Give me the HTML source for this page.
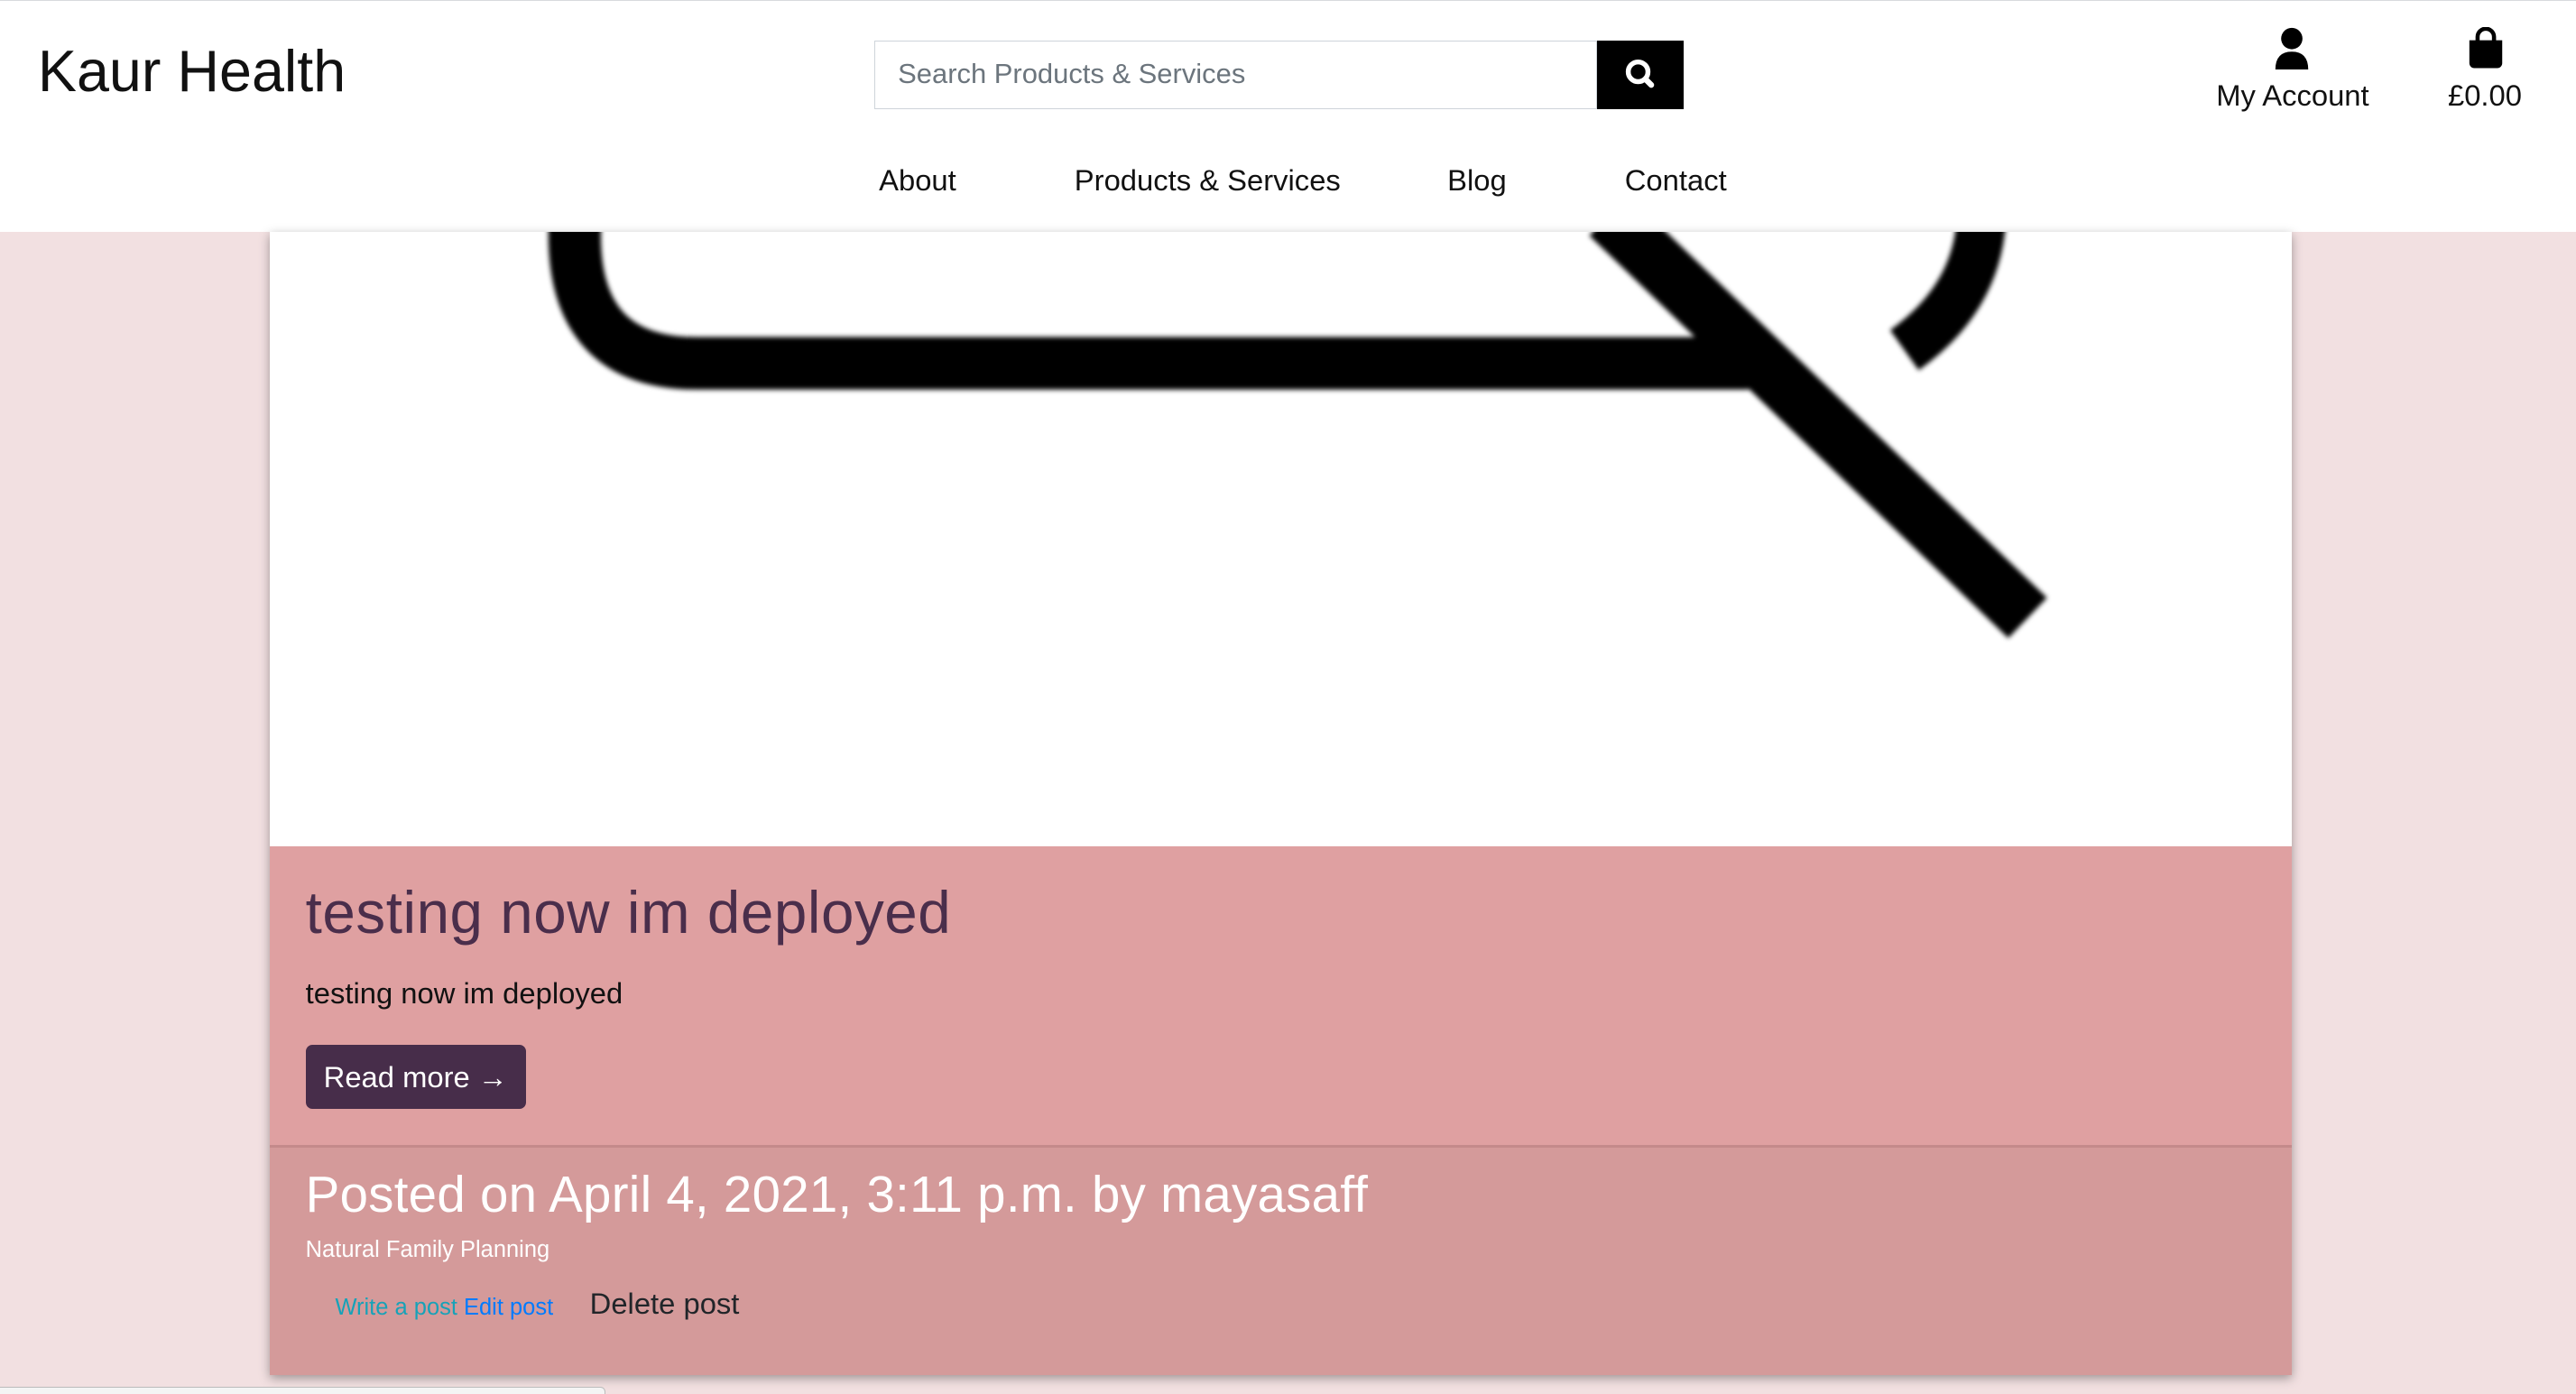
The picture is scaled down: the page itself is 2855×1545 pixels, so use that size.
<!DOCTYPE html>
<html><head><meta charset="utf-8"><style>
html{zoom:1.8208}
body{margin:0;width:1568px;height:848px;overflow:hidden;background:#f2e0e1;font-family:"Liberation Sans",sans-serif;position:relative}
.hdr{position:absolute;left:0;top:0;width:1568px;height:141px;background:#fff;border-top:1px solid #d8dadd;box-sizing:border-box}
.a{position:absolute;white-space:nowrap}
.card{position:absolute;left:164px;top:141px;width:1231px;height:696px;background:#fff;box-shadow:0 2px 6px rgba(0,0,0,.35);overflow:hidden}
</style></head><body>
<div class="hdr">
 <div class="a" style="left:23px;top:22px;font-size:35.5px;color:#111">Kaur Health</div>
 <div class="a" style="left:532px;top:24px;width:440px;height:42px;border:1px solid #ced4da;box-sizing:border-box;font-size:17px;color:#6c757d;line-height:40px;padding-left:14px">Search Products &amp; Services</div>
 <div class="a" style="left:972px;top:24px;width:53px;height:42px;background:#000">
  <svg width="53" height="42" viewBox="0 0 53 42"><circle cx="25" cy="19" r="6" stroke="#fff" stroke-width="3" fill="none"/><path d="M29.5 23.5 L33 27" stroke="#fff" stroke-width="3.5" stroke-linecap="round"/></svg>
 </div>
 <svg class="a" style="left:1384px;top:16px" width="22" height="26" viewBox="0 0 22 26"><circle cx="11" cy="7" r="6.5" fill="#000"/><path d="M1 26 Q1 15 11 15 Q21 15 21 26Z" fill="#000"/></svg>
 <div class="a" style="left:1349px;top:47px;font-size:18px;color:#111">My Account</div>
 <svg class="a" style="left:1502px;top:16px" width="22" height="26" viewBox="0 0 22 26"><path d="M6 9 V6 a5 5 0 0 1 10 0 V9" stroke="#000" stroke-width="2.5" fill="none"/><path d="M1 8 H21 V22 a3 3 0 0 1-3 3 H4 a3 3 0 0 1-3-3Z" fill="#000"/></svg>
 <div class="a" style="left:1490px;top:47px;font-size:18px;color:#111">£0.00</div>
 <div class="a" style="left:535px;top:99px;font-size:18px;color:#111">About</div>
 <div class="a" style="left:654px;top:99px;font-size:18px;color:#111">Products &amp; Services</div>
 <div class="a" style="left:881px;top:99px;font-size:18px;color:#111">Blog</div>
 <div class="a" style="left:989px;top:99px;font-size:18px;color:#111">Contact</div>
</div>
<div class="card">
 <svg class="a" style="left:0;top:0" width="1231" height="374" viewBox="0 0 1231 374">
  <g stroke="#000" stroke-width="32" fill="none" style="filter:blur(1.5px)">
   <path d="M186 -10 Q180 80 260 80 H900"/>
   <path d="M815 -10 L1070 235" stroke-width="34"/>
   <path d="M1042 -10 Q1040 40 995 72" stroke-width="30"/>
  </g>
 </svg>
 <div class="a" style="left:0;top:374px;width:1231px;height:182px;background:#dfa0a1"></div>
 <div class="a" style="left:22px;top:394px;font-size:36px;letter-spacing:0.3px;color:#4a2e4b">testing now im deployed</div>
 <div class="a" style="left:22px;top:453px;font-size:18px;color:#111">testing now im deployed</div>
 <div class="a" style="left:22px;top:495px;width:134px;height:39px;background:#472d4a;border-radius:4px;color:#fff;font-size:18px;line-height:39px;text-align:center">Read more →</div>
 <div class="a" style="left:0;top:556px;width:1231px;height:140px;background:#d49a9a;border-top:2px solid #c48a8b;box-sizing:border-box"></div>
 <div class="a" style="left:22px;top:568px;font-size:31px;letter-spacing:0.15px;color:#fff">Posted on April 4, 2021, 3:11 p.m. by mayasaff</div>
 <div class="a" style="left:22px;top:612px;font-size:14px;color:#fff">Natural Family Planning</div>
 <div class="a" style="left:40px;top:647px;font-size:14px;color:#17a2b8">Write a post <span style="color:#007bff">Edit post</span></div>
 <div class="a" style="left:195px;top:642px;font-size:18px;color:#212529">Delete post</div>
</div>
<div class="a" style="left:0;top:844px;width:368px;height:4px;border-top:1px solid #bbb;border-right:1px solid #bbb;background:#f4f4f4;border-radius:0 3px 0 0"></div>
</body></html>
